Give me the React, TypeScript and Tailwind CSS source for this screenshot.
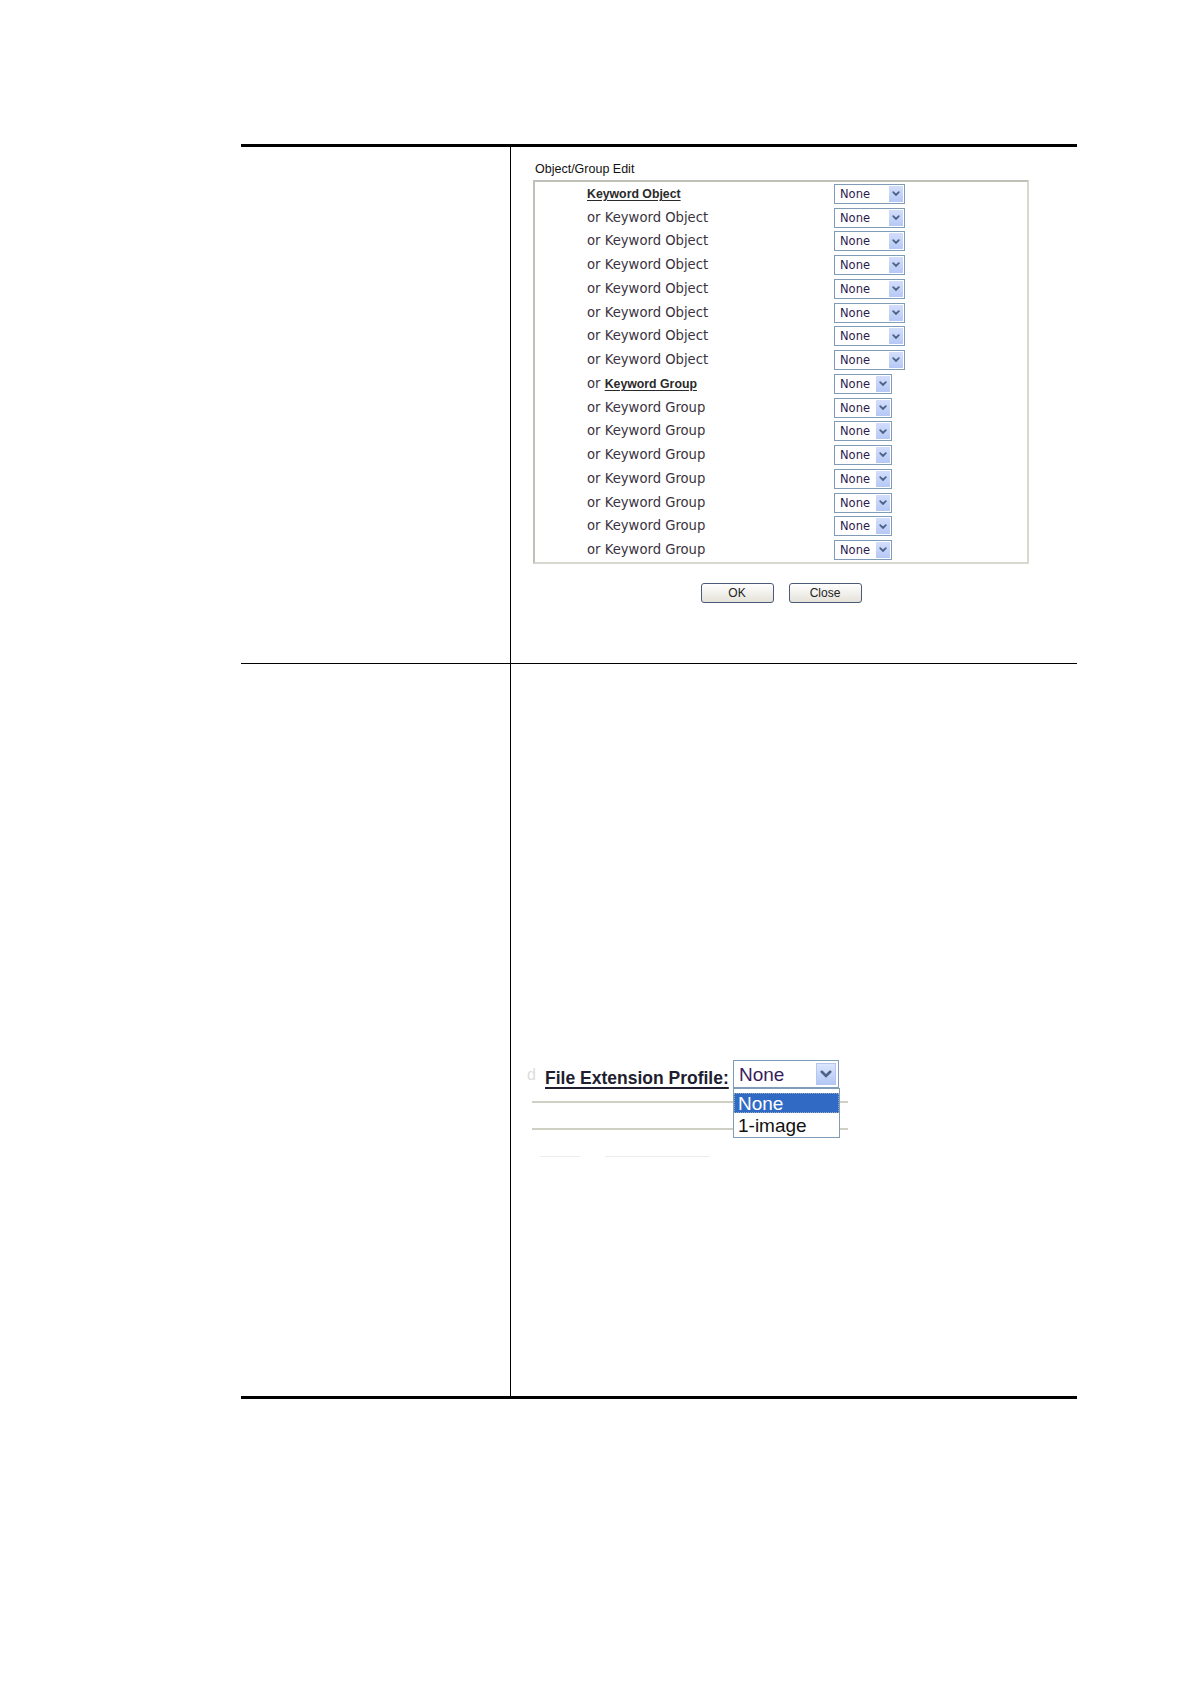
import React from 'react';

const rows: { pre?: string; label: string; head?: boolean; wide: boolean }[] = [
  { label: 'Keyword Object', head: true, wide: true },
  ...Array.from({ length: 7 }, () => ({ pre: 'or ', label: 'Keyword Object', wide: true })),
  { pre: 'or ', label: 'Keyword Group', head: true, wide: false },
  ...Array.from({ length: 7 }, () => ({ pre: 'or ', label: 'Keyword Group', wide: false })),
];

const Chevron = ({ size = 8 }: { size?: number }) => (
  <svg width={size} height={size * 0.7} viewBox="0 0 10 7">
    <path d="M1.5 1.5 L5 5 L8.5 1.5" fill="none" stroke="#4d6185" strokeWidth="2.2" strokeLinecap="round" />
  </svg>
);

const SmallSelect = ({ wide }: { wide: boolean }) => (
  <div
    className={`flex h-[20px] items-stretch border border-[#7f9db9] bg-white ${wide ? 'w-[71px]' : 'w-[58px]'}`}
  >
    <span className="flex-1 pl-[5px] text-[11.5px] leading-[18px] text-[#2e1a4f] [font-family:'DejaVu_Sans',sans-serif]">
      None
    </span>
    <span className="m-[1px] flex w-[14px] items-center justify-center bg-gradient-to-b from-[#d3defc] to-[#b5c8f5]">
      <Chevron />
    </span>
  </div>
);

const Btn = ({ children }: { children: React.ReactNode }) => (
  <button className="h-[20px] w-[73px] rounded-[3px] border border-[#4a5a78] bg-gradient-to-b from-white to-[#e4e2d8] text-[12px] leading-[18px] text-[#222] [font-family:'Liberation_Sans',Arial,sans-serif]">
    {children}
  </button>
);

export default function App() {
  return (
    <div className="relative h-[1684px] w-[1190px] bg-white">
      <div className="ml-[241px] w-[836px] pt-[144px]">
        <div className="border-b-[3px] border-t-[3px] border-black">
          {/* row 1 */}
          <div className="grid h-[517px] grid-cols-[270px_1fr] border-b border-black">
            <div className="border-r border-black" />
            <div className="pl-[22px] pt-[14px]">
              <div className="pl-[2px] text-[12.5px] leading-[16px] text-[#111] [font-family:'Liberation_Sans',Arial,sans-serif]">
                Object/Group Edit
              </div>
              <div className="mt-[3px] w-[496px] border-2 border-b-[#d8d8d0] border-l-[#c0c0b8] border-r-[#d8d8d0] border-t-[#c0c0b8]">
                {rows.map((r, i) => (
                  <div key={i} className="grid h-[23.75px] grid-cols-[299px_1fr] items-center">
                    <div className="pl-[52px] text-[13.2px] leading-[16px] text-[#3a3340] [font-family:'DejaVu_Sans',Verdana,sans-serif]">
                      {r.pre}
                      {r.head ? (
                        <span className="text-[12.3px] font-bold text-[#2a2a2a] underline underline-offset-2 [font-family:'Liberation_Sans',Arial,sans-serif]">
                          {r.label}
                        </span>
                      ) : (
                        r.label
                      )}
                    </div>
                    <SmallSelect wide={r.wide} />
                  </div>
                ))}
              </div>
              <div className="mt-[19px] flex w-[496px] justify-center gap-[15px]">
                <Btn>OK</Btn>
                <Btn>Close</Btn>
              </div>
            </div>
          </div>
          {/* row 2 */}
          <div className="grid h-[732px] grid-cols-[270px_1fr]">
            <div className="border-r border-black" />
            <div className="pl-[16px] pt-[396px]">
              <div className="relative w-[325px]">
                <div className="flex h-[28px] items-center">
                  <span className="w-[18px] pt-[2px] text-[16px] text-[#dcdcdc] [font-family:'Liberation_Sans',Arial,sans-serif]">
                    d
                  </span>
                  <span className="w-[188px] pt-[9px] text-[17.5px] font-bold text-[#1e1e30] underline decoration-[1.5px] underline-offset-[3px] [font-family:'Liberation_Sans',Arial,sans-serif]">
                    File Extension Profile:
                  </span>
                  <div className="relative">
                    <div className="flex h-[28px] w-[106px] items-stretch border border-[#7f9db9] bg-white">
                      <span className="flex-1 pl-[5px] pt-[2px] text-[19px] leading-[24px] text-[#3c1a5e] [font-family:'Liberation_Sans',Arial,sans-serif]">
                        None
                      </span>
                      <span className="my-[2px] mr-[2px] flex w-[20px] items-center justify-center border border-[#b6c6ee] bg-gradient-to-b from-[#dbe5fd] to-[#b3c7f5]">
                        <Chevron size={12} />
                      </span>
                    </div>
                    <div className="absolute left-0 top-[28px] z-10 w-[107px] border border-[#7f9db9] bg-white pt-[4px] [font-family:'Liberation_Sans',Arial,sans-serif]">
                      <div className="h-[20px] border border-dotted border-[#9ab] bg-[#316ac5] pl-[3px] text-[19px] leading-[19px] text-white">
                        None
                      </div>
                      <div className="h-[24px] pl-[4px] pt-[2px] text-[19px] leading-[22px] text-[#111]">1-image</div>
                    </div>
                  </div>
                </div>
                <div className="ml-[5px] mt-[13px] h-[2px] w-[316px] bg-[#cfcfc4]" />
                <div className="ml-[5px] mt-[25px] h-[2px] w-[316px] bg-[#cfcfc4]" />
                <div className="mt-[26px] flex gap-[25px] pl-[13px]">
                  <div className="h-[1px] w-[40px] bg-[#ececec]" />
                  <div className="h-[1px] w-[105px] bg-[#ececec]" />
                </div>
              </div>
            </div>
          </div>
        </div>
      </div>
    </div>
  );
}
